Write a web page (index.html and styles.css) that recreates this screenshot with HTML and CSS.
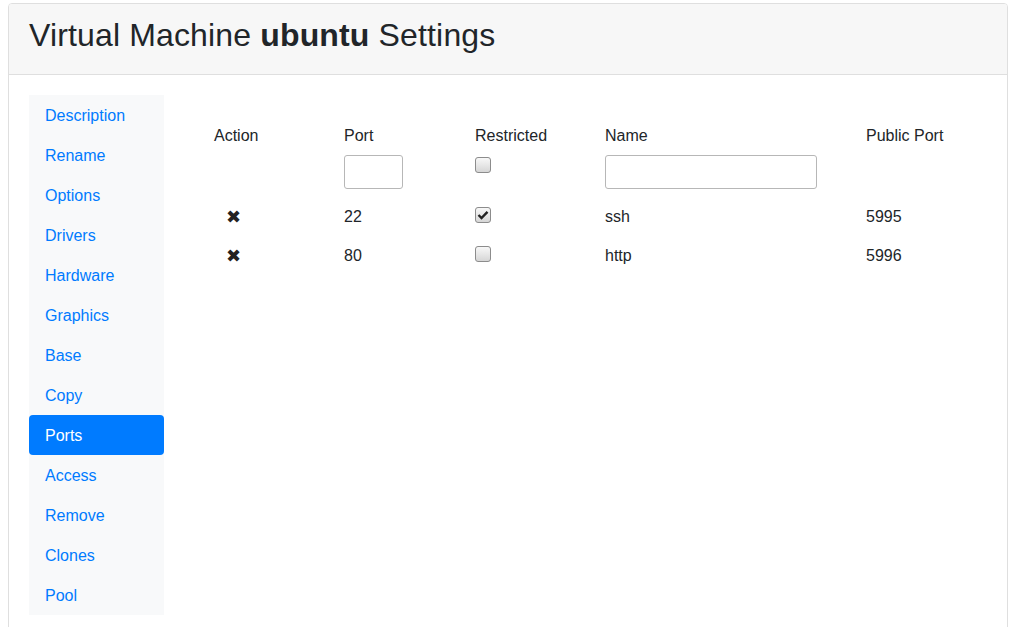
FILE: index.html
```html
<!DOCTYPE html>
<html>
<head>
<meta charset="utf-8">
<link rel="stylesheet" href="styles.css">
</head>
<body>
<div class="card">
  <div class="card-header">
    <h2 class="title">Virtual Machine <b>ubuntu</b> Settings</h2>
  </div>
  <div class="card-body">
    <nav class="nav">
      <a class="nav-link">Description</a>
      <a class="nav-link">Rename</a>
      <a class="nav-link">Options</a>
      <a class="nav-link">Drivers</a>
      <a class="nav-link">Hardware</a>
      <a class="nav-link">Graphics</a>
      <a class="nav-link">Base</a>
      <a class="nav-link">Copy</a>
      <a class="nav-link active">Ports</a>
      <a class="nav-link">Access</a>
      <a class="nav-link">Remove</a>
      <a class="nav-link">Clones</a>
      <a class="nav-link">Pool</a>
    </nav>
    <div class="content">
      <table class="ports">
        <colgroup>
          <col class="c-action"><col class="c-port"><col class="c-restr"><col class="c-name"><col class="c-pub">
        </colgroup>
        <thead>
          <tr class="head">
            <th>Action</th>
            <th>Port</th>
            <th>Restricted</th>
            <th>Name</th>
            <th>Public Port</th>
          </tr>
          <tr class="inputs">
            <td></td>
            <td><input class="field field-port" type="text"></td>
            <td><span class="cb"></span></td>
            <td><input class="field field-name" type="text"></td>
            <td></td>
          </tr>
        </thead>
        <tbody>
          <tr class="row">
            <td><span class="del">✖</span></td>
            <td>22</td>
            <td><span class="cb checked"><svg width="12" height="10" viewBox="0 0 12 10"><path d="M1.5 5 L4.5 8 L10.5 1.8" fill="none" stroke="#222" stroke-width="2.4"/></svg></span></td>
            <td>ssh</td>
            <td>5995</td>
          </tr>
          <tr class="row">
            <td><span class="del">✖</span></td>
            <td>80</td>
            <td><span class="cb"></span></td>
            <td>http</td>
            <td>5996</td>
          </tr>
        </tbody>
      </table>
    </div>
  </div>
</div>
</body>
</html>
```

FILE: styles.css
```css
* { box-sizing: border-box; }
html, body { margin: 0; padding: 0; background: #fff; }
body {
  padding: 3px 12px 0 8px;
  font-family: "Liberation Sans", Arial, sans-serif;
  font-size: 16px;
  line-height: 1.5;
  color: #212529;
  height: 627px;
  overflow: hidden;
}
.card {
  border: 1px solid #dfdfdf;
  border-radius: 4px;
  background: #fff;
}
.card-header {
  background: #f7f7f7;
  border-bottom: 1px solid #dfdfdf;
  padding: 12px 20px 12px 20px;
  border-radius: 3px 3px 0 0;
}
.title {
  margin: 0 0 8px 0;
  font-size: 32px;
  font-weight: 400;
  line-height: 1.2;
  letter-spacing: 0.15px;
}
.title b { font-weight: 700; }
.card-body {
  padding: 20px;
  display: flex;
  gap: 30px;
}
.nav {
  width: 135px;
  flex: none;
  display: flex;
  flex-direction: column;
  background: #f8f9fa;
}
.nav-link {
  display: block;
  padding: 9px 16px 7px;
  color: #007bff;
  text-decoration: none;
  border-radius: 4px;
}
.nav-link.active {
  background: #007bff;
  color: #fff;
}
.content {
  flex: 1;
  min-width: 0;
  padding-top: 17px;
}
.ports {
  border-collapse: collapse;
  margin-left: 8px;
  table-layout: fixed;
  width: 784px;
}
.ports th, .ports td {
  text-align: left;
  font-weight: 400;
  padding: 0 12px;
  vertical-align: top;
}
.c-action { width: 130px; }
.c-port { width: 131px; }
.c-restr { width: 130px; }
.c-name { width: 261px; }
.c-pub { width: 132px; }
.head th { padding-top: 12px; padding-bottom: 7px; }
.inputs td { padding-bottom: 7px; height: 50px; }
.field {
  display: block;
  height: 34px;
  border: 1px solid #b7b7b7;
  border-radius: 3px;
  background: #fff;
  padding: 0 6px;
  font: inherit;
}
.field-port { width: 59px; }
.field-name { width: 212px; }
.cb {
  display: inline-flex;
  align-items: center;
  justify-content: center;
  width: 16px;
  height: 16px;
  border: 1px solid #8c8c8c;
  border-radius: 3px;
  background: linear-gradient(#f8f8f8, #d6d6d6);
  margin-top: 2px;
  vertical-align: top;
}
.row td { height: 39px; line-height: 24px; }
.del {
  display: inline-block;
  margin-left: 12px;
  font-family: "DejaVu Sans", sans-serif;
  font-size: 18px;
  line-height: 24px;
  color: #222;
}
```
